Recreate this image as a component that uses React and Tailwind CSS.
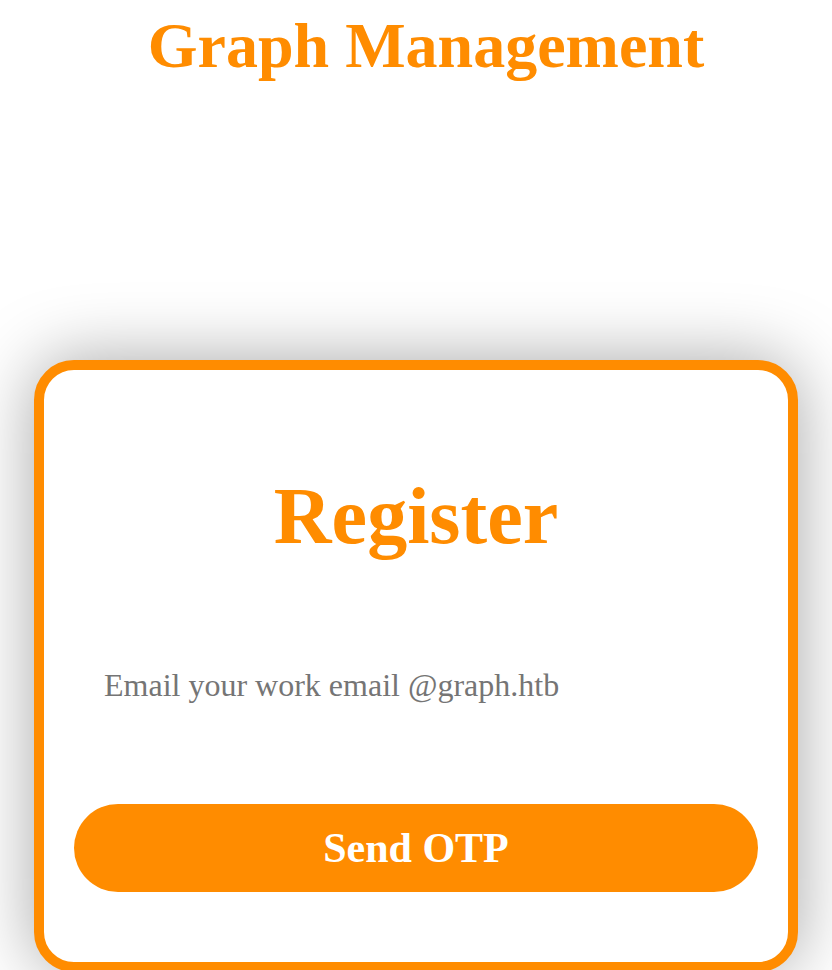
import React from 'react';

const App = () => {
    return (
        <div className="h-[970px] w-full overflow-hidden bg-white font-['Liberation_Serif','Times_New_Roman',serif]">
            {/* Page title */}
            <h1 className="pl-[20px] pt-[10px] text-center text-[64px] font-bold leading-[72px] text-[#ff8c00]">
                Graph Management
            </h1>

            {/* Register card */}
            <div className="mx-[34px] mt-[278px] rounded-[40px] border-[10px] border-[#ff8c00] bg-white px-[30px] pb-[70px] pt-[102px] shadow-[0_0_70px_rgba(0,0,0,0.35)]">
                <h2 className="text-center text-[80px] font-bold leading-[88px] text-[#ff8c00]">
                    Register
                </h2>

                <input
                    type="email"
                    placeholder="Email your work email @graph.htb"
                    className="mt-[95px] block w-full bg-transparent px-[30px] py-[10px] text-[32px] leading-[40px] text-black outline-none placeholder:text-[#757575]"
                />

                <button
                    type="button"
                    className="mt-[89px] flex h-[88px] w-full items-center justify-center rounded-full bg-[#ff8c00] text-[42px] font-bold text-white"
                >
                    Send OTP
                </button>
            </div>
        </div>
    );
};

export default App;
